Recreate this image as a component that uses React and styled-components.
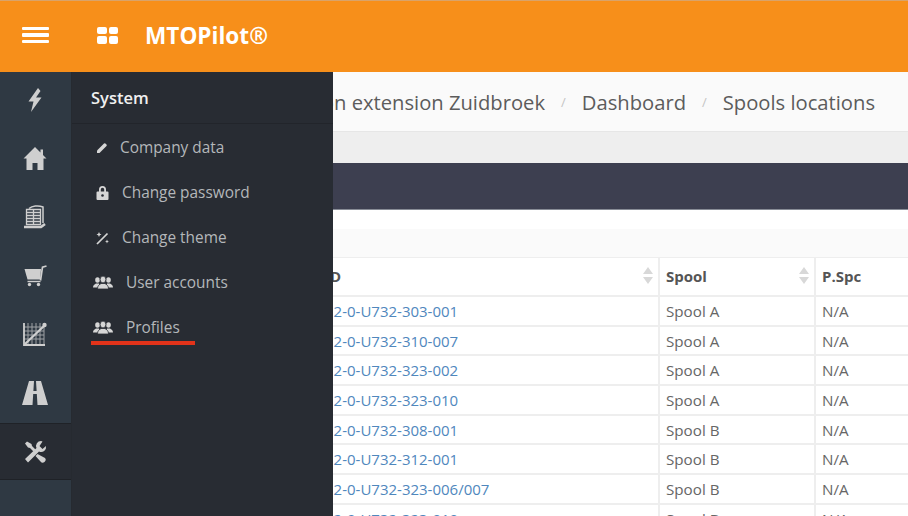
import React from 'react'
import styled, { createGlobalStyle } from 'styled-components'

const Global = createGlobalStyle`
  html,body{
    margin:0;
    height:100%;
    overflow:hidden;
    font-family:"Open Sans","Noto Sans",sans-serif;
  }
  #root{height:100%;}
  *{box-sizing:border-box;}
`

const Bolt = () => (
  <svg width="16" height="24" viewBox="0 0 16 24"><path d="M11 0 1.500 13.500h5L4 24 14.500 9.500H9L13.500 3z" fill="currentColor"/></svg>
)
const Home = () => (
  <svg width="24" height="23" viewBox="0 0 24 23"><path d="M12 0 .5 11.500H3.500V23h6v-7h5v7h6V11.500h3L20 8V2.500h-2.500V5.500z" fill="currentColor"/></svg>
)
const Pallet = () => (
  <svg width="24" height="25" viewBox="0 0 24 25" fill="none" stroke="currentColor">
    <path d="M6 3.500C9 1 15 0 20 2v16" strokeWidth="1.500"/>
    <path d="M3.500 4.500h14v15h-14zM10.500 4.500v15" strokeWidth="1.300"/>
    <path d="M3.500 7.500h14M3.500 10.500h14M3.500 13.500h14M3.500 16.500h14" strokeWidth="1.700"/>
    <path d="M1 22h17l4-3" strokeWidth="2.600"/>
  </svg>
)
const Cart = () => (
  <svg width="23" height="22" viewBox="0 0 23 22"><path d="M.5 4h16.500l-.8 10.500H3.500z" fill="currentColor"/><path d="M16.500 15.500 18.500 2.200 22.500 1" fill="none" stroke="currentColor" strokeWidth="1.700"/><path d="M3.500 16.500h13" stroke="currentColor" strokeWidth="1.400"/><circle cx="5.500" cy="19.500" r="1.700" fill="currentColor"/><circle cx="14.500" cy="19.500" r="1.700" fill="currentColor"/></svg>
)
const Chart = () => (
  <svg width="24" height="24" viewBox="0 0 24 24">
    <path d="M1 5h20M1 9h20M1 13h20M1 17h20M5 1v22M9 1v22M13 1v22M17 1v22M21 3v20" stroke="currentColor" strokeWidth="1" opacity=".7"/>
    <path d="M1 1v22h21" fill="none" stroke="currentColor" strokeWidth="1.800"/>
    <path d="M2 22 21 4" stroke="currentColor" strokeWidth="2.200"/>
    <circle cx="21.500" cy="3" r="2.200" fill="currentColor"/>
  </svg>
)
const Road = () => (
  <svg width="26" height="24" viewBox="0 0 26 24"><path d="M7 0h5L10.500 24H0zM14 0h5L26 24H15.500zM11 10h4v3h-4z" fill="currentColor"/></svg>
)
const Tools = () => (
  <svg width="23" height="22" viewBox="0 0 23 22"><path d="M17 0a5 5 0 0 0-4.500 7L1 18l3 3.500L15 10.500a5 5 0 0 0 7-5.500L18.500 8 15.500 5l3-4.500z" fill="currentColor"/><path d="M3 .5 1 2.500l3 4 2 .5 3.500 3.500 2-2L8 5 7.500 3zM13.500 13l-2 2 5 5.500a1.500 1.500 0 0 0 4.500-3.500z" fill="currentColor"/></svg>
)
const Pencil = () => (
  <svg width="12" height="12" viewBox="0 0 12 12"><path d="M1 8.500 8 1.500a1 1 0 0 1 1.400 0l1.100 1.100a1 1 0 0 1 0 1.400L3.500 11H1z" fill="currentColor"/></svg>
)
const Lock = () => (
  <svg width="13" height="15" viewBox="0 0 13 15"><path d="M3 6.500V4.500a3.500 3.500 0 0 1 7 0v2h1.500a1 1 0 0 1 1 1V14a1 1 0 0 1-1 1h-10a1 1 0 0 1-1-1V7.500a1 1 0 0 1 1-1zm1.800 0h3.400V4.500a1.700 1.700 0 0 0-3.400 0z" fill="currentColor"/><circle cx="6.500" cy="10.500" r="1.300" fill="#282c33"/></svg>
)
const Wand = () => (
  <svg width="14" height="14" viewBox="0 0 14 14"><path d="M1 13 11.500 2.500" stroke="currentColor" strokeWidth="1.700"/><path d="M3 1l.8 1.700L5.500 3.500 3.800 4.300 3 6l-.8-1.700L.5 3.500l1.700-.8zM11 8.500l.6 1.400 1.400.6-1.400.6L11 12.500l-.6-1.400-1.400-.6 1.400-.6z" fill="currentColor"/></svg>
)
const Users = () => (
  <svg width="20" height="13" viewBox="0 0 20 13"><ellipse cx="4.500" cy="4" rx="2.300" ry="2.800" fill="currentColor"/><ellipse cx="15.500" cy="4" rx="2.300" ry="2.800" fill="currentColor"/><path d="M0 11.500c0-2.500 1.500-3 3-4l3 0v4zM20 11.500c0-2.500-1.500-3-3-4l-3 0v4z" fill="currentColor"/><ellipse cx="10" cy="3.500" rx="2.900" ry="3.400" fill="currentColor" stroke="#282c33" strokeWidth=".8"/><path d="M4.500 13c0-3.500 1.500-4 3.500-5.500h4c2 1.500 3.500 2 3.500 5.500z" fill="currentColor" stroke="#282c33" strokeWidth=".8"/></svg>
)

const railIcons = [
  { icon: <Bolt /> },
  { icon: <Home /> },
  { icon: <Pallet /> },
  { icon: <Cart /> },
  { icon: <Chart /> },
  { icon: <Road /> },
  { icon: <Tools />, active: true },
]

const menu = [
  { label: 'Company data', icon: <Pencil />, width: 28, inset: 4 },
  { label: 'Change password', icon: <Lock />, width: 30, inset: 4 },
  { label: 'Change theme', icon: <Wand />, width: 30, inset: 4 },
  { label: 'User accounts', icon: <Users />, width: 34, inset: 1 },
  { label: 'Profiles', icon: <Users />, width: 34, inset: 1, marked: true },
]

const rows = [
  ['12-0-U732-303-001', 'Spool A'],
  ['12-0-U732-310-007', 'Spool A'],
  ['12-0-U732-323-002', 'Spool A'],
  ['12-0-U732-323-010', 'Spool A'],
  ['12-0-U732-308-001', 'Spool B'],
  ['12-0-U732-312-001', 'Spool B'],
  ['12-0-U732-323-006/007', 'Spool B'],
  ['12-0-U732-323-010', 'Spool B'],
]

const SortArrows = () => (
  <SortIcon viewBox="0 0 10 17"><path d="M5 0 10 7H0zM5 17 0 10h10z" fill="currentColor"/></SortIcon>
)

export default function App() {
  return (
    <Page>
      <Global />
      <TopBar>
        <Burger><span /><span /><span /></Burger>
        <AppGrid><i /><i /><i /><i /></AppGrid>
        <Brand>MTOPilot®</Brand>
      </TopBar>
      <Body>
        <Rail>
          {railIcons.map((item, i) => (
            <RailItem key={i} $active={item.active}>{item.icon}</RailItem>
          ))}
        </Rail>
        <Panel>
          <PanelTitle>System</PanelTitle>
          <MenuList>
            {menu.map(item => (
              <MenuItem key={item.label} $marked={item.marked}>
                <MenuIcon $width={item.width} $inset={item.inset}>{item.icon}</MenuIcon>
                {item.label}
              </MenuItem>
            ))}
          </MenuList>
        </Panel>
        <Main>
          <Breadcrumb>
            <span>Station extension Zuidbroek</span>
            <Slash>/</Slash>
            <span>Dashboard</span>
            <Slash>/</Slash>
            <span>Spools locations</span>
          </Breadcrumb>
          <GreyStrip />
          <DarkBar />
          <WhiteGap />
          <TableTools />
          <Table>
            <HeadCell>ID<SortArrows /></HeadCell>
            <HeadCell>Spool<SortArrows /></HeadCell>
            <HeadCell>P.Spc</HeadCell>
            {rows.map(([id, spool], i) => (
              <React.Fragment key={i}>
                <Cell><IdLink>{id}</IdLink></Cell>
                <Cell>{spool}</Cell>
                <Cell>N/A</Cell>
              </React.Fragment>
            ))}
          </Table>
        </Main>
      </Body>
    </Page>
  )
}

const Page = styled.div`
  height:516px;
  width:908px;
  display:flex;
  flex-direction:column;
  overflow:hidden;
`
const TopBar = styled.header`
  height:72px;
  flex:none;
  display:flex;
  align-items:center;
  padding-bottom:3px;
  background:#f78f1a;
  border-top:1px solid #d9a36a;
  color:#fff;
`
const Burger = styled.div`
  width:71px;
  display:flex;
  flex-direction:column;
  align-items:center;
  gap:3px;
  span{
    display:block;
    width:27px;
    height:3.500px;
    background:#fff;
    border-radius:1px;
  }
`
const AppGrid = styled.div`
  margin-left:26px;
  width:21px;
  display:grid;
  grid-template-columns:1fr 1fr;
  gap:2px;
  i{
    display:block;
    height:7.500px;
    background:#fff;
    border-radius:2px;
  }
`
const Brand = styled.div`
  margin-left:27px;
  font-size:22.600px;
  font-weight:700;
`
const Body = styled.div`
  flex:1;
  display:flex;
  min-height:0;
`
const Rail = styled.nav`
  width:72px;
  flex:none;
  display:flex;
  flex-direction:column;
  background:#2f3943;
  border-right:1px solid #262a30;
  color:#cfcfcf;
`
const RailItem = styled.div`
  height:${p => (p.$active ? '57px' : '58.500px')};
  flex:none;
  padding:${p => (p.$active ? '0 1px 0 0' : '0 1px 2px 0')};
  display:flex;
  align-items:center;
  justify-content:center;
  ${p => p.$active && `
    background:#282c33;
    border-top:1px solid #1f2227;
    border-bottom:1px solid #1f2227;
  `}
`
const Panel = styled.aside`
  width:261px;
  flex:none;
  background:#282c33;
`
const PanelTitle = styled.div`
  height:52px;
  padding-left:19px;
  display:flex;
  align-items:center;
  color:#f0f0f0;
  font-size:16.500px;
  font-weight:600;
  border-bottom:1px solid #22252b;
`
const MenuList = styled.div`
  display:flex;
  flex-direction:column;
  padding-top:1px;
`
const MenuItem = styled.div`
  position:relative;
  height:45px;
  display:flex;
  align-items:center;
  padding-left:20px;
  color:#b4b7ba;
  font-size:15.400px;
  ${p => p.$marked && `
    &::after{
      content:"";
      position:absolute;
      left:19px;
      bottom:5px;
      width:104px;
      height:4px;
      background:#e2331a;
    }
  `}
`
const MenuIcon = styled.span`
  width:${p => p.$width}px;
  padding-left:${p => p.$inset}px;
  flex:none;
  display:flex;
  align-items:center;
  color:#d6d6d6;
`
const Main = styled.main`
  flex:1;
  min-width:0;
  overflow:hidden;
  background:#fff;
  display:flex;
  flex-direction:column;
`
const Breadcrumb = styled.div`
  height:60px;
  flex:none;
  display:flex;
  justify-content:flex-end;
  align-items:center;
  gap:16px;
  padding-right:33px;
  background:#fafafa;
  border-bottom:1px solid #e6e6e6;
  color:#5c5c5c;
  font-size:20.200px;
  white-space:nowrap;
  span{flex:none;}
`
const Slash = styled.span`
  color:#c4c4c4;
  font-size:13px;
`
const GreyStrip = styled.div`
  height:31px;
  flex:none;
  background:#eee;
`
const DarkBar = styled.div`
  height:47px;
  flex:none;
  background:#3d3f50;
  border-bottom:1px solid #888c96;
`
const WhiteGap = styled.div`
  height:19px;
  flex:none;
`
const TableTools = styled.div`
  height:28px;
  flex:none;
  background:#fafafa;
`
const Table = styled.div`
  margin-left:-17px;
  display:grid;
  grid-template-columns:344px 156px 1fr;
  grid-template-rows:39px;
  grid-auto-rows:29.700px;
  border-top:1px solid #eee;
  color:#666;
  font-size:15px;
`
const HeadCell = styled.div`
  display:flex;
  align-items:center;
  justify-content:space-between;
  padding:0 5px 2px 6px;
  font-weight:700;
  color:#555;
  border-right:2px solid #eee;
  border-bottom:2px solid #eee;
  &:nth-child(1){padding-left:9px;}
  &:nth-child(3){border-right:none;}
`
const SortIcon = styled.svg`
  width:10px;
  height:17px;
  color:#d8d8d8;
`
const Cell = styled.div`
  display:flex;
  align-items:center;
  padding:0 6px;
  font-size:15.200px;
  border-right:2px solid #eee;
  border-bottom:2px solid #eee;
  &:nth-child(3n){border-right:none;}
  &:nth-child(3n+1){padding-left:9px;font-size:15px;}
`
const IdLink = styled.a`
  color:#4f87bd;
`
